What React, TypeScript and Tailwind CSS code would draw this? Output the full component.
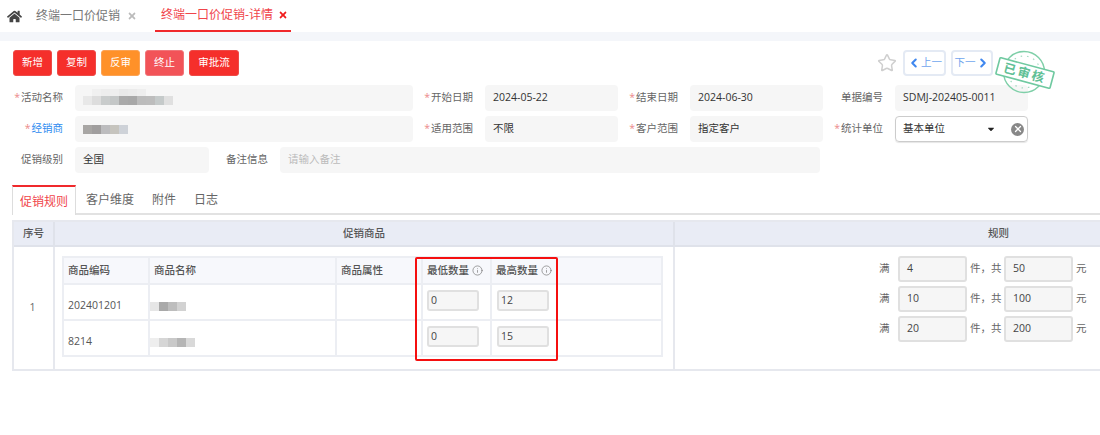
import React from 'react';
import { ChevronLeft, ChevronRight, Info, Star, X } from 'lucide-react';
import { FaCaretDown, FaHome, FaTimes } from 'react-icons/fa';

const BUTTONS = [
  { label: '新增', cls: 'w-[39px] bg-[#f52f2b] border-[#ee4a47]' },
  { label: '复制', cls: 'w-[39px] bg-[#f52f2b] border-[#ee4a47]' },
  { label: '反审', cls: 'w-[39px] bg-[#ff9129] border-[#fba253]' },
  { label: '终止', cls: 'w-[39px] bg-[#f25358] border-[#f0767a]' },
  { label: '审批流', cls: 'w-[50px] bg-[#f52f2b] border-[#ee4a47]' }
];

const PRODUCTS = [
  { code: '202401201', min: '0', max: '12', blur: ['#e6e6e6', '#a9a9a9', '#bdbdbd', '#d2d2d2'] },
  { code: '8214', min: '0', max: '15', blur: ['#eeeeee', '#d6d6d6', '#c9c9c9', '#b5b5b5', '#d9d9d9'] }
];

const RULES = [
  ['4', '50'],
  ['10', '100'],
  ['20', '200']
];

const Label: React.FC<{ text: string; w: string; required?: boolean; blue?: boolean }> = ({
  text,
  w,
  required,
  blue
}) => (
  <div className={`${w} mr-3 flex shrink-0 items-center justify-end`}>
    {required && <span className="mr-[1px] text-[#ec8a8a]">*</span>}
    <span className={blue ? 'text-[#2f8cf0]' : 'text-[#666]'}>{text}</span>
  </div>
);

const Value: React.FC<{ w: string; children?: React.ReactNode; muted?: boolean }> = ({ w, children, muted }) => (
  <div
    className={`${w} flex h-[26px] shrink-0 items-center rounded-[4px] bg-[#f6f6f6] pl-[8px] ${muted ? 'text-[#bbb]' : 'text-[#333]'}`}
  >
    {children}
  </div>
);

const Mosaic: React.FC<{ colors: string[]; size?: string }> = ({ colors, size = 'w-[9px] h-[9px]' }) => (
  <div className="flex blur-[0.5px]">
    {colors.map((c, i) => (
      <div key={i} className={size} style={{ backgroundColor: c }} />
    ))}
  </div>
);

const BoxInput: React.FC<{ value: string; cls: string }> = ({ value, cls }) => (
  <div className={`${cls} flex items-center rounded-[3px] border-2 border-[#e0e0e0] bg-[#f6f6f6] text-[#444]`}>
    {value}
  </div>
);

export default function App() {
  return (
    <div
      className="relative h-[435px] w-[1100px] overflow-hidden bg-white text-[10.5px] text-[#333]"
      style={{ fontFamily: '"Open Sans", "Noto Sans CJK SC", sans-serif' }}
    >
      {/* top tabs */}
      <div className="flex h-8 items-center text-[12px]">
        <FaHome className="ml-[7px] h-[15px] w-[15px] text-[#444]" />
        <span className="ml-[14px] text-[#777]">终端一口价促销</span>
        <FaTimes className="ml-[7px] h-[10px] w-[10px] text-[#bbb]" />
        <div className="ml-[18px] flex h-8 w-[136px] items-center border-b-2 border-[#f0292c] pl-[6px] text-[#f0444a]">
          <span>终端一口价促销-详情</span>
          <FaTimes className="ml-[5px] h-[10px] w-[10px] text-[#f01c1c]" />
        </div>
      </div>
      <div className="h-[9px] bg-[#f4f6fa]" />

      {/* toolbar */}
      <div className="mt-[9px] flex h-[26px] items-center justify-between pl-[13px] pr-[107px]">
        <div className="flex gap-[5px]">
          {BUTTONS.map((b) => (
            <div
              key={b.label}
              className={`${b.cls} flex h-[26px] items-center justify-center rounded-[3px] border text-white`}
            >
              {b.label}
            </div>
          ))}
        </div>
        <div className="flex items-center">
          <Star className="mr-[6px] h-[20px] w-[20px] text-[#cfcfcf]" strokeWidth={1.8} />
          <div className="flex h-[26px] w-[43px] items-center justify-center rounded-[4px] border-2 border-[#e4eaf4] text-[#6fa4ee]">
            <ChevronLeft className="h-[14px] w-[14px] text-[#3f87ef]" strokeWidth={3.5} />
            <span>上一</span>
          </div>
          <div className="ml-[5px] flex h-[26px] w-[42px] items-center justify-center rounded-[4px] border-2 border-[#e4eaf4] text-[#6fa4ee]">
            <span>下一</span>
            <ChevronRight className="h-[14px] w-[14px] text-[#3f87ef]" strokeWidth={3.5} />
          </div>
        </div>
      </div>

      {/* form */}
      <div className="mt-[9px] flex flex-col gap-[5px]">
        <div className="flex h-[26px] items-center">
          <Label text="活动名称" w="w-[63px]" required />
          <Value w="w-[338px]">
            <div className="-mt-[2px]">
              <div className="ml-[9px]">
                <Mosaic size="w-[9px] h-[7px]" colors={['#f0f0f0', '#ededed', '#eeeeee', '#e9e9e9', '#ebebeb', '#eeeeee']} />
              </div>
              <Mosaic colors={['#e8e8e8', '#dddddd', '#c9cccc', '#c4c7c7', '#aaaaaa', '#a8a8a8', '#bcbcbc', '#bdbdbd', '#c5caca', '#e0e0e0']} />
            </div>
          </Value>
          <Label text="开始日期" w="w-[60px]" required />
          <Value w="w-[133px]">2024-05-22</Value>
          <Label text="结束日期" w="w-[60px]" required />
          <Value w="w-[133px]">2024-06-30</Value>
          <Label text="单据编号" w="w-[60px]" />
          <Value w="w-[133px]">SDMJ-202405-0011</Value>
        </div>
        <div className="flex h-[26px] items-center">
          <Label text="经销商" w="w-[63px]" required blue />
          <Value w="w-[338px]">
            <Mosaic colors={['#a8a6a4', '#a09e9e', '#bcbcbe', '#c6c4be', '#ced2d8']} />
          </Value>
          <Label text="适用范围" w="w-[60px]" required />
          <Value w="w-[133px]">不限</Value>
          <Label text="客户范围" w="w-[60px]" required />
          <Value w="w-[133px]">指定客户</Value>
          <Label text="统计单位" w="w-[60px]" required />
          <div className="flex h-[26px] w-[133px] shrink-0 items-center rounded-[4px] border border-[#ccc] pl-[7px] pr-[3px] shadow-[0_1px_1px_rgba(0,0,0,0.1)]">
            <span className="flex-1">基本单位</span>
            <FaCaretDown className="mr-[15px] h-[10px] w-[10px] text-[#222]" />
            <span className="flex h-[13px] w-[13px] items-center justify-center rounded-full bg-[#888]">
              <X className="h-[10px] w-[10px] text-white" strokeWidth={3} />
            </span>
          </div>
        </div>
        <div className="flex h-[26px] items-center">
          <Label text="促销级别" w="w-[63px]" />
          <Value w="w-[134px]">全国</Value>
          <Label text="备注信息" w="w-[59px]" />
          <Value w="w-[540px]" muted>
            请输入备注
          </Value>
        </div>
      </div>

      {/* detail tabs */}
      <div className="mt-3 ml-3 flex h-[30px] items-center border-b-2 border-[#e2e2e2] text-[12px] text-[#666]">
        <div className="-mb-[2px] flex h-[30px] w-[64px] items-center justify-center border-x border-t-2 border-x-[#ddd] border-t-[#f0292c] bg-white pt-[1px] text-[#f0444a]">
          促销规则
        </div>
        <span className="ml-[10px] pt-[2px]">客户维度</span>
        <span className="ml-[18px] pt-[2px]">附件</span>
        <span className="ml-[18px] pt-[2px]">日志</span>
      </div>

      {/* rule table */}
      <div className="ml-3 mt-[5px] w-[1310px] border-y-2 border-l-2 border-[#e6e8ee]">
        <div className="grid grid-cols-[39px_620px_1fr] border-b-2 border-[#dfe2ea] bg-[#e9ecf5] text-[#555]">
          <div className="flex h-[23px] items-center justify-center font-medium">序号</div>
          <div className="flex h-[23px] items-center justify-center border-l-2 border-[#dfe2ea] font-medium">促销商品</div>
          <div className="flex h-[23px] items-center justify-center border-l-2 border-[#dfe2ea] font-medium">规则</div>
        </div>
        <div className="grid h-[122px] grid-cols-[39px_620px_1fr]">
          <div className="flex items-center justify-center pr-[2px] text-[#666]">1</div>
          <div className="border-l-2 border-[#e6e8ee] pl-[7px] pt-[9px]">
            <div className="w-[601px] border-2 border-[#eceef3]">
              <div className="grid h-[25px] grid-cols-[84px_187px_86px_69px_1fr] items-center bg-[#f7f8fc] font-medium text-[#555]">
                <div className="pl-[4px]">商品编码</div>
                <div className="flex h-full items-center border-l-2 border-[#eceef3] pl-[4px]">商品名称</div>
                <div className="flex h-full items-center border-l-2 border-[#eceef3] pl-[4px]">商品属性</div>
                <div className="flex h-full items-center border-l-2 border-[#eceef3] pl-[4px]">
                  最低数量
                  <Info className="ml-[3px] h-[11px] w-[11px] text-[#777]" strokeWidth={1.5} />
                </div>
                <div className="flex h-full items-center border-l-2 border-[#eceef3] pl-[4px]">
                  最高数量
                  <Info className="ml-[3px] h-[11px] w-[11px] text-[#777]" strokeWidth={1.5} />
                </div>
              </div>
              {PRODUCTS.map((p) => (
                <div
                  key={p.code}
                  className="grid h-[36px] grid-cols-[84px_187px_86px_69px_1fr] items-center border-t-2 border-[#eceef3] text-[#555]"
                >
                  <div className="pl-[4px] pt-2">{p.code}</div>
                  <div className="flex h-full items-center border-l-2 border-[#eceef3] pt-2">
                    <Mosaic colors={p.blur} />
                  </div>
                  <div className="h-full border-l-2 border-[#eceef3]" />
                  <div className="flex h-full items-center border-l-2 border-[#eceef3] pb-[3px] pl-[4px]">
                    <BoxInput value={p.min} cls="h-[21px] w-[52px] pl-[2px]" />
                  </div>
                  <div className="flex h-full items-center border-l-2 border-[#eceef3] pb-[3px] pl-[5px]">
                    <BoxInput value={p.max} cls="h-[21px] w-[52px] pl-[2px]" />
                  </div>
                </div>
              ))}
            </div>
          </div>
          <div className="flex flex-col gap-1 border-l-2 border-[#e6e8ee] pl-[204px] pt-[9px] text-[#666]">
            {RULES.map(([qty, price]) => (
              <div key={qty} className="flex h-[26px] items-center">
                <span className="w-[19px]">满</span>
                <BoxInput value={qty} cls="h-[26px] w-[69px] pl-[7px] text-[#333]" />
                <span className="mx-[3px] w-[31px] whitespace-nowrap">件，共</span>
                <BoxInput value={price} cls="h-[26px] w-[69px] pl-[7px] text-[#333]" />
                <span className="ml-[3px]">元</span>
              </div>
            ))}
          </div>
        </div>
      </div>

      {/* annotation box */}
      <div className="absolute left-[415px] top-[257px] h-[104px] w-[143px] rounded-[2px] border-[2.5px] border-[#f50f0f]" />

      {/* approved stamp */}
      <svg className="absolute left-[995px] top-[50px]" width="60" height="46" viewBox="0 0 60 46">
        <circle cx="29" cy="22" r="20.5" fill="none" stroke="#7fcfa8" strokeWidth="1.4" />
        <circle cx="29" cy="22" r="16" fill="none" stroke="#a5dcc2" strokeWidth="1.2" strokeDasharray="1.5 5" />
        <g transform="rotate(15 30 23)">
          <rect x="2" y="14.5" width="56" height="17" rx="1" fill="#fff" stroke="#6fc9a0" strokeWidth="1.6" />
          <text
            x="30"
            y="27.5"
            textAnchor="middle"
            fontSize="12.5"
            fontWeight="700"
            letterSpacing="2"
            fill="#5fc096"
            fontFamily='"Noto Sans CJK SC", sans-serif'
          >
            已审核
          </text>
        </g>
      </svg>
    </div>
  );
}
